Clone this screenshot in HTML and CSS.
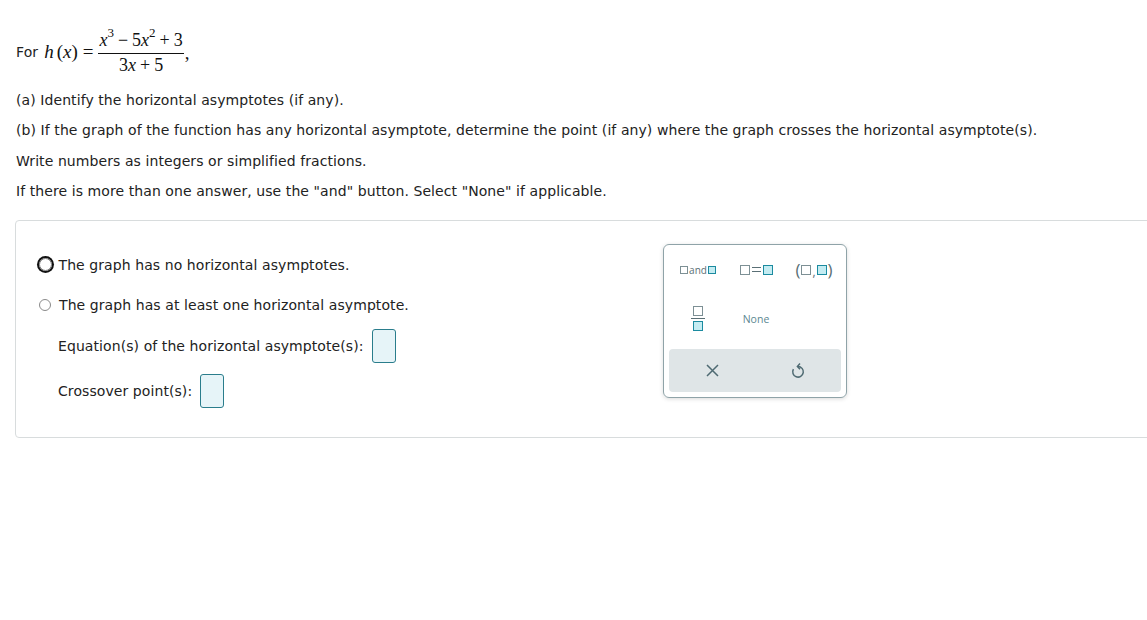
FILE: index.html
```html
<!DOCTYPE html>
<html lang="en">
<head>
    <meta charset="UTF-8">
    <title>Horizontal Asymptotes</title>
    <link rel="stylesheet" href="styles.css">
</head>
<body>

    <div class="question">
        <div class="func-line">
            <span>For</span>
            <span class="math">
                <i class="fn">h</i><span class="paren-x">(<i>x</i>)</span><span class="op-eq">=</span>
                <span class="frac">
                    <span class="num"><i>x</i><sup>3</sup><span class="op">−</span>5<i>x</i><sup>2</sup><span class="op">+</span>3</span>
                    <span class="den">3<i>x</i><span class="op">+</span>5</span>
                </span><span class="comma">,</span>
            </span>
        </div>
        <p>(a) Identify the horizontal asymptotes (if any).</p>
        <p>(b) If the graph of the function has any horizontal asymptote, determine the point (if any) where the graph crosses the horizontal asymptote(s).</p>
        <p>Write numbers as integers or simplified fractions.</p>
        <p>If there is more than one answer, use the "and" button. Select "None" if applicable.</p>
    </div>

    <div class="answer-box">
        <div class="choices">
            <label class="choice">
                <span class="radio focused"></span>
                <span>The graph has no horizontal asymptotes.</span>
            </label>
            <label class="choice">
                <span class="radio"></span>
                <span>The graph has at least one horizontal asymptote.</span>
            </label>
            <div class="field">
                <span>Equation(s) of the horizontal asymptote(s):</span>
                <span class="blank"></span>
            </div>
            <div class="field">
                <span>Crossover point(s):</span>
                <span class="blank"></span>
            </div>
        </div>

        <!-- keypad -->
        <div class="keypad">
            <div class="keys">
                <div class="key">
                    <span class="sq small"></span><span class="and">and</span><span class="sq small fill"></span>
                </div>
                <div class="key">
                    <span class="sq"></span>
                    <span class="eq"></span>
                    <span class="sq fill"></span>
                </div>
                <div class="key paren">
                    <span class="br">(</span><span class="sq"></span><span class="cm">,</span><span class="sq fill"></span><span class="br">)</span>
                </div>
                <div class="key">
                    <span class="kfrac">
                        <span class="sq"></span>
                        <span class="kbar"></span>
                        <span class="sq fill"></span>
                    </span>
                </div>
                <div class="key none">None</div>
            </div>
            <div class="actions">
                <svg width="13" height="13" viewBox="0 0 13 13">
                    <path d="M1 1 L12 12 M12 1 L1 12" stroke="#4e6a72" stroke-width="1.5" fill="none"/>
                </svg>
                <svg width="14" height="17" viewBox="0 0 14 17">
                    <path d="M7 4.5 A5.3 5.3 0 1 1 2.4 7.2" stroke="#4e6a72" stroke-width="1.5" fill="none"/>
                    <path d="M9 1.6 L6.4 4.5 L9 7.3" stroke="#4e6a72" stroke-width="1.5" fill="none"/>
                </svg>
            </div>
        </div>
    </div>

</body>
</html>
```

FILE: styles.css
```css
body {
    margin: 0;
    font-family: "DejaVu Sans", Verdana, sans-serif;
    font-size: 14px;
    letter-spacing: 0.08px;
    color: #222;
    background: white;
}

.question {
    padding: 21px 16px 0 16px;
}

.question p {
    margin: 0;
    line-height: 30.4px;
}

/* function line */
.func-line {
    display: flex;
    align-items: center;
    height: 62px;
    margin-bottom: 2px;
}

.math {
    display: flex;
    align-items: center;
    margin-left: 6px;
    font-family: "Liberation Serif", "Times New Roman", serif;
    font-size: 19px;
    letter-spacing: 0;
    color: #111;
}

.math i {
    font-style: italic;
}

.paren-x {
    margin-left: 3px;
}

.op-eq {
    margin: 0 5px 0 5px;
}

.frac {
    display: inline-flex;
    flex-direction: column;
    align-items: center;
    font-size: 18px;
}

.frac .op {
    margin: 0 4px;
}

.frac .num {
    padding: 0 1px 1px 1px;
    border-bottom: 1px solid #111;
    line-height: 24px;
}

.frac .den {
    line-height: 22px;
}

.frac sup {
    font-size: 13px;
    vertical-align: 9px;
    line-height: 0;
}

.comma {
    margin-top: 2px;
    margin-left: 1px;
}

/* answer area */
.answer-box {
    display: flex;
    align-items: flex-start;
    gap: 10px;
    width: 1160px;
    height: 218px;
    margin: 13px 0 0 15px;
    padding: 23px 0 0 23px;
    border: 1px solid #d8dcdd;
    border-radius: 4px;
    box-sizing: border-box;
}

.choices {
    width: 614px;
    margin-top: 11px;
    display: flex;
    flex-direction: column;
}

.choice {
    display: flex;
    align-items: center;
    gap: 8px;
    height: 20px;
    margin-bottom: 20px;
}

.choice:nth-child(2) {
    margin-bottom: 14px;
}

.radio {
    width: 12px;
    height: 12px;
    border: 1px solid #8a8a8a;
    border-radius: 50%;
    box-sizing: border-box;
    flex-shrink: 0;
}

.radio.focused {
    width: 13px;
    height: 13px;
    margin-left: -0.5px;
    margin-right: -1px;
    border-color: #777;
    box-shadow: 0 0 0 2px #111;
}

.field {
    display: flex;
    align-items: center;
    gap: 8px;
    padding-left: 19px;
    margin-bottom: 11px;
}

.blank {
    width: 24px;
    height: 34px;
    box-sizing: border-box;
    border: 1.5px solid #2a7d8c;
    border-radius: 3px;
    background: #e6f4f8;
}

/* keypad */
.keypad {
    width: 184px;
    height: 154px;
    box-sizing: border-box;
    border: 1px solid #8fa3a8;
    border-radius: 6px;
    box-shadow: 0 1px 4px rgba(0, 0, 0, 0.15);
    padding: 5px;
    display: flex;
    flex-direction: column;
    font-family: "Open Sans", "DejaVu Sans", sans-serif;
    letter-spacing: 0;
}

.keys {
    display: grid;
    grid-template-columns: repeat(3, 58px);
    grid-template-rows: 40px 58px;
    align-items: center;
    justify-items: center;
}

.key {
    display: flex;
    align-items: center;
    color: #5a6f75;
}

.sq {
    display: inline-block;
    width: 10px;
    height: 10px;
    box-sizing: border-box;
    border: 1.5px solid #7d9095;
    background: white;
}

.sq.small {
    width: 8px;
    height: 8px;
}

.sq.fill {
    border-color: #1b8ba0;
    background: #c4ecf2;
}

.and {
    font-size: 10px;
    color: #5a6f75;
    margin: 0 1px;
}

.eq {
    display: inline-block;
    width: 9px;
    height: 3px;
    margin: 0 2px;
    border-top: 1.5px solid #5a6f75;
    border-bottom: 1.5px solid #5a6f75;
}

.paren .br {
    font-size: 17px;
    color: #5a6f75;
    line-height: 1;
}

.paren .sq {
    margin: 0 1px;
}

.paren .cm {
    font-size: 12px;
    margin-top: 4px;
}

.kfrac {
    display: flex;
    flex-direction: column;
    align-items: center;
    gap: 2px;
}

.kbar {
    width: 14px;
    height: 1.5px;
    background: #5a6f75;
}

.none {
    font-size: 10.5px;
    color: #5c8791;
}

.actions {
    margin-top: auto;
    height: 43px;
    background: #dfe5e7;
    border-radius: 4px;
    display: grid;
    grid-template-columns: 1fr 1fr;
    align-items: center;
    justify-items: center;
}
```
